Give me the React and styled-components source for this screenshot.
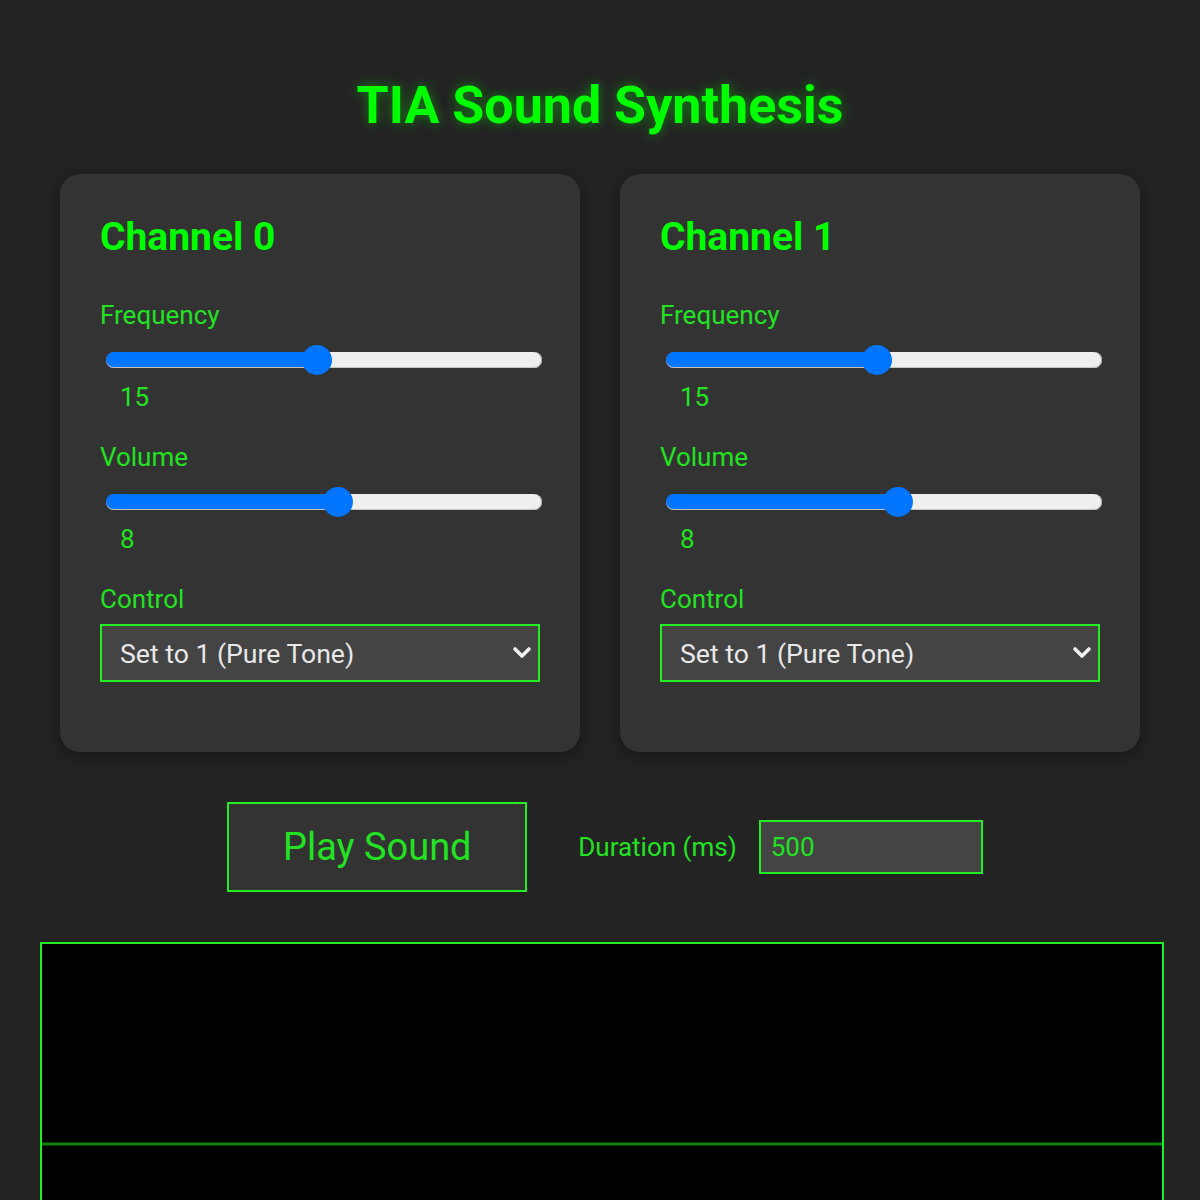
import styled, { createGlobalStyle } from "styled-components";
import { useState } from "react";

const GlobalStyle = createGlobalStyle`
  html, body {
    margin: 0;
    padding: 0;
    background: #232323;
    font-family: Roboto, "Liberation Sans", sans-serif;
  }
`;

const GREEN = "#00ff00";
const SOFT_GREEN = "#22e222";
const LINE_GREEN = "#22ee22";

const CONTROLS = ["Set to 0 (Silent)", "Set to 1 (Pure Tone)", "Set to 4 (Square)", "Set to 8 (Noise)", "Set to 12 (Low Tone)"];

export const App = () => {
  const [channels, setChannels] = useState([
    { freq: 15, vol: 8, ctrl: CONTROLS[1] },
    { freq: 15, vol: 8, ctrl: CONTROLS[1] },
  ]);
  const [duration, setDuration] = useState("500");

  const update = (i, key, value) => {
    setChannels(channels.map((c, j) => (j === i ? { ...c, [key]: value } : c)));
  };

  return (
    <Page>
      <GlobalStyle />
      <Title>TIA Sound Synthesis</Title>
      <CardGrid>
        {channels.map((ch, i) => (
          <Card key={i}>
            <ChannelTitle>Channel {i}</ChannelTitle>
            <Field>
              <Label>Frequency</Label>
              <Slider
                type="range"
                min={0}
                max={31}
                value={ch.freq}
                style={{ "--pct": ch.freq / 31 }}
                onChange={(ev) => update(i, "freq", Number(ev.target.value))}
              />
              <Value>{ch.freq}</Value>
            </Field>
            <Field>
              <Label>Volume</Label>
              <Slider
                type="range"
                min={0}
                max={15}
                value={ch.vol}
                style={{ "--pct": ch.vol / 15 }}
                onChange={(ev) => update(i, "vol", Number(ev.target.value))}
              />
              <Value>{ch.vol}</Value>
            </Field>
            <Label>Control</Label>
            <SelectWrap>
              <Select value={ch.ctrl} onChange={(ev) => update(i, "ctrl", ev.target.value)}>
                {CONTROLS.map((c) => (
                  <option key={c}>{c}</option>
                ))}
              </Select>
              <Chevron width="20" height="13" viewBox="0 0 20 13">
                <polyline points="3,3 10,10 17,3" fill="none" stroke="#f2f2f2" strokeWidth="3.6" strokeLinecap="round" strokeLinejoin="round" />
              </Chevron>
            </SelectWrap>
          </Card>
        ))}
      </CardGrid>
      <ActionRow>
        <PlayButton>Play Sound</PlayButton>
        <DurationLabel>Duration (ms)</DurationLabel>
        <DurationInput value={duration} onChange={(ev) => setDuration(ev.target.value)} />
      </ActionRow>
      <Scope>
        <svg width="1120" height="400" viewBox="0 0 1120 400">
          <defs>
            <filter id="glow" x="-5%" y="-300%" width="110%" height="700%">
              <feGaussianBlur stdDeviation="1.8" />
            </filter>
          </defs>
          <line x1="0" y1="200" x2="1120" y2="200" stroke="#0d8a0d" strokeWidth="6" filter="url(#glow)" />
          <line x1="0" y1="200" x2="1120" y2="200" stroke="#0a850a" strokeWidth="3" />
        </svg>
      </Scope>
    </Page>
  );
};

export default App;

const Page = styled.div`
  padding: 40px 40px 0;
  overflow: hidden;
`;

const Title = styled.h1`
  margin: 35px 0 38px;
  text-align: center;
  font-size: 52px;
  font-weight: 700;
  line-height: 61px;
  color: ${GREEN};
  text-shadow: 0 0 12px rgba(0, 255, 0, 0.45);
`;

const CardGrid = styled.div`
  display: grid;
  grid-template-columns: 520px 520px;
  gap: 40px;
  padding: 0 20px;
`;

const Card = styled.div`
  background: #333333;
  border-radius: 20px;
  padding: 40px 40px 70px;
  box-shadow: 0 4px 18px rgba(0, 0, 0, 0.35);
`;

const ChannelTitle = styled.h2`
  margin: 0 0 40px;
  font-size: 39px;
  font-weight: 700;
  line-height: 46px;
  color: ${GREEN};
`;

const Field = styled.div`
  margin-bottom: 30px;
`;

const Label = styled.div`
  font-size: 26px;
  line-height: 30px;
  color: ${SOFT_GREEN};
`;

const Slider = styled.input`
  -webkit-appearance: none;
  appearance: none;
  display: block;
  width: 436px;
  height: 30px;
  margin: 15px 0 7px 6px;
  background: transparent;

  &::-webkit-slider-runnable-track {
    height: 16px;
    border-radius: 8px;
    background: linear-gradient(
      to right,
      #0075ff calc(15px + var(--pct) * 406px),
      #efefef calc(15px + var(--pct) * 406px)
    );
    box-shadow: inset -1px 0 0 #a8a8a8, inset 0 -1px 0 #c4c4c4;
  }

  &::-webkit-slider-thumb {
    -webkit-appearance: none;
    width: 30px;
    height: 30px;
    margin-top: -7px;
    border-radius: 50%;
    background: #0075ff;
    border: none;
  }
`;

const Value = styled.div`
  margin-left: 20px;
  font-size: 26px;
  line-height: 30px;
  color: ${SOFT_GREEN};
`;

const SelectWrap = styled.div`
  position: relative;
  margin-top: 10px;
  width: 440px;
`;

const Select = styled.select`
  -webkit-appearance: none;
  appearance: none;
  display: block;
  width: 440px;
  height: 58px;
  padding: 0 40px 0 18px;
  background: #444444;
  border: 2px solid ${LINE_GREEN};
  border-radius: 0;
  color: #e8e8e8;
  font-family: Roboto, "Liberation Sans", sans-serif;
  font-size: 26.6px;
  outline: none;
`;

const Chevron = styled.svg`
  position: absolute;
  right: 8px;
  top: 22px;
  pointer-events: none;
`;

const ActionRow = styled.div`
  display: flex;
  align-items: center;
  justify-content: center;
  padding-left: 10px;
  margin: 50px 0;
`;

const PlayButton = styled.button`
  width: 300px;
  height: 90px;
  margin-right: 51px;
  background: #333333;
  border: 2px solid ${LINE_GREEN};
  color: ${SOFT_GREEN};
  font-family: Roboto, "Liberation Sans", sans-serif;
  font-size: 38px;
  cursor: pointer;
`;

const DurationLabel = styled.label`
  margin-right: 22px;
  font-size: 26px;
  color: ${SOFT_GREEN};
`;

const DurationInput = styled.input`
  box-sizing: border-box;
  width: 224px;
  height: 54px;
  padding: 0 10px;
  background: #444444;
  border: 2px solid ${LINE_GREEN};
  color: ${SOFT_GREEN};
  font-family: Roboto, "Liberation Sans", sans-serif;
  font-size: 26px;
  outline: none;
`;

const Scope = styled.div`
  width: 1120px;
  height: 400px;
  border: 2px solid ${LINE_GREEN};
  background: #000000;
  line-height: 0;
`;
